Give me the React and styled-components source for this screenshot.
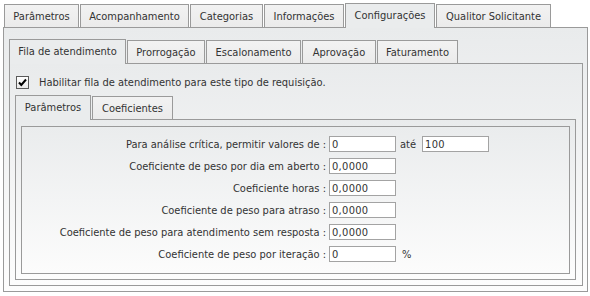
import React from 'react';
import styled, { createGlobalStyle } from 'styled-components';

const Global = createGlobalStyle`
  html, body { margin: 0; padding: 0; background: #fff; }
  body {
    font-family: "DejaVu Sans Condensed", "DejaVu Sans", sans-serif;
    font-size: 11px;
    color: #333;
  }
`;

const Page = styled.div`
  width: 590px;
  height: 296px;
  box-sizing: border-box;
  padding: 3px 2px 0 3px;
`;

const TabStrip = styled.div`
  display: flex;
  align-items: flex-end;
  gap: 1px;
  padding-left: ${p => p.$indent || 0}px;
`;

const Tab = styled.div`
  box-sizing: border-box;
  position: relative;
  z-index: 1;
  width: ${p => p.$w}px;
  height: ${p => (p.$active ? p.$h + 2 : p.$h)}px;
  margin-bottom: ${p => (p.$active ? -1 : 0)}px;
  padding-bottom: ${p => (p.$active ? 2 : 0)}px;
  display: flex;
  align-items: center;
  justify-content: center;
  border: 1px solid #9a9a9a;
  border-bottom: none;
  background: ${p => (p.$active ? '#eaeced' : 'linear-gradient(#f2f2f2, #ebebeb)')};
  white-space: nowrap;
  color: #333;
`;

const Panel = styled.div`
  border: 1px solid #9a9a9a;
  background: linear-gradient(#e9ebec, #fdfdfd);
  padding: ${p => p.$pad};
  display: flex;
  flex-direction: column;
`;

const CheckRow = styled.label`
  display: flex;
  align-items: center;
  height: 14px;
  margin: 11px 0 6px 1px;
  gap: 10px;
`;

const CheckBox = styled.span`
  box-sizing: border-box;
  width: 13px;
  height: 13px;
  border: 1px solid #5a5a5a;
  background: linear-gradient(#ffffff, #e8e8e8);
  display: flex;
  align-items: center;
  justify-content: center;
`;

const Fieldset = styled.div`
  border: 1px solid #9a9a9a;
  background: linear-gradient(#eaeced, #fcfcfc);
  padding: 9px 0 11px;
  display: flex;
  flex-direction: column;
  gap: 6px;
`;

const Row = styled.div`
  display: flex;
  align-items: center;
  height: 16px;
`;

const Label = styled.div`
  width: 307px;
  padding-right: 3px;
  box-sizing: border-box;
  text-align: right;
  white-space: nowrap;
`;

const Input = styled.div`
  box-sizing: border-box;
  width: 67px;
  height: 16px;
  border: 1px solid #a3a3a3;
  background: #fff;
  padding: 0 2px;
  display: flex;
  align-items: center;
  color: #333;
  letter-spacing: 0.3px;
`;

const Suffix = styled.span`
  margin: 0 ${p => p.$after || 0}px 0 ${p => p.$before || 5}px;
`;

const outerTabs = [
  ['Parâmetros', 75], ['Acompanhamento', 109], ['Categorias', 73],
  ['Informações', 80], ['Configurações', 90], ['Qualitor Solicitante', 115],
];
const midTabs = [
  ['Fila de atendimento', 117], ['Prorrogação', 78], ['Escalonamento', 95],
  ['Aprovação', 74], ['Faturamento', 81],
];
const innerTabs = [['Parâmetros', 76], ['Coeficientes', 81]];

const rows = [
  { label: 'Para análise crítica, permitir valores de :', value: '0', extra: 'range' },
  { label: 'Coeficiente de peso por dia em aberto :', value: '0,0000' },
  { label: 'Coeficiente horas :', value: '0,0000' },
  { label: 'Coeficiente de peso para atraso :', value: '0,0000' },
  { label: 'Coeficiente de peso para atendimento sem resposta :', value: '0,0000' },
  { label: 'Coeficiente de peso por iteração :', value: '0', extra: 'pct' },
];

export default function App() {
  return (
    <>
      <Global />
      <Page>
        <TabStrip $indent={1}>
          {outerTabs.map(([t, w]) => (
            <Tab key={t} $w={w} $h={23} $active={t === 'Configurações'}>{t}</Tab>
          ))}
        </TabStrip>
        <Panel $pad="11px 4px 5px 5px">
          <TabStrip>
            {midTabs.map(([t, w]) => (
              <Tab key={t} $w={w} $h={23} $active={t === 'Fila de atendimento'}>{t}</Tab>
            ))}
          </TabStrip>
          <Panel $pad="0 6px 5px 5px">
            <CheckRow>
              <CheckBox>
                <svg width="11" height="11" viewBox="0 0 11 11">
                  <path d="M2 5.5 L4.3 8 L9 2.5" fill="none" stroke="#000" strokeWidth="2" />
                </svg>
              </CheckBox>
              Habilitar fila de atendimento para este tipo de requisição.
            </CheckRow>
            <TabStrip>
              {innerTabs.map(([t, w]) => (
                <Tab key={t} $w={w} $h={23} $active={t === 'Parâmetros'}>{t}</Tab>
              ))}
            </TabStrip>
            <Panel $pad="6px 5px 5px 5px">
              <Fieldset>
                {rows.map(r => (
                  <Row key={r.label}>
                    <Label>{r.label}</Label>
                    <Input>{r.value}</Input>
                    {r.extra === 'range' && (
                      <>
                        <Suffix $before={4} $after={6}>até</Suffix>
                        <Input>100</Input>
                      </>
                    )}
                    {r.extra === 'pct' && <Suffix $before={6}>%</Suffix>}
                  </Row>
                ))}
              </Fieldset>
            </Panel>
          </Panel>
        </Panel>
      </Page>
    </>
  );
}
